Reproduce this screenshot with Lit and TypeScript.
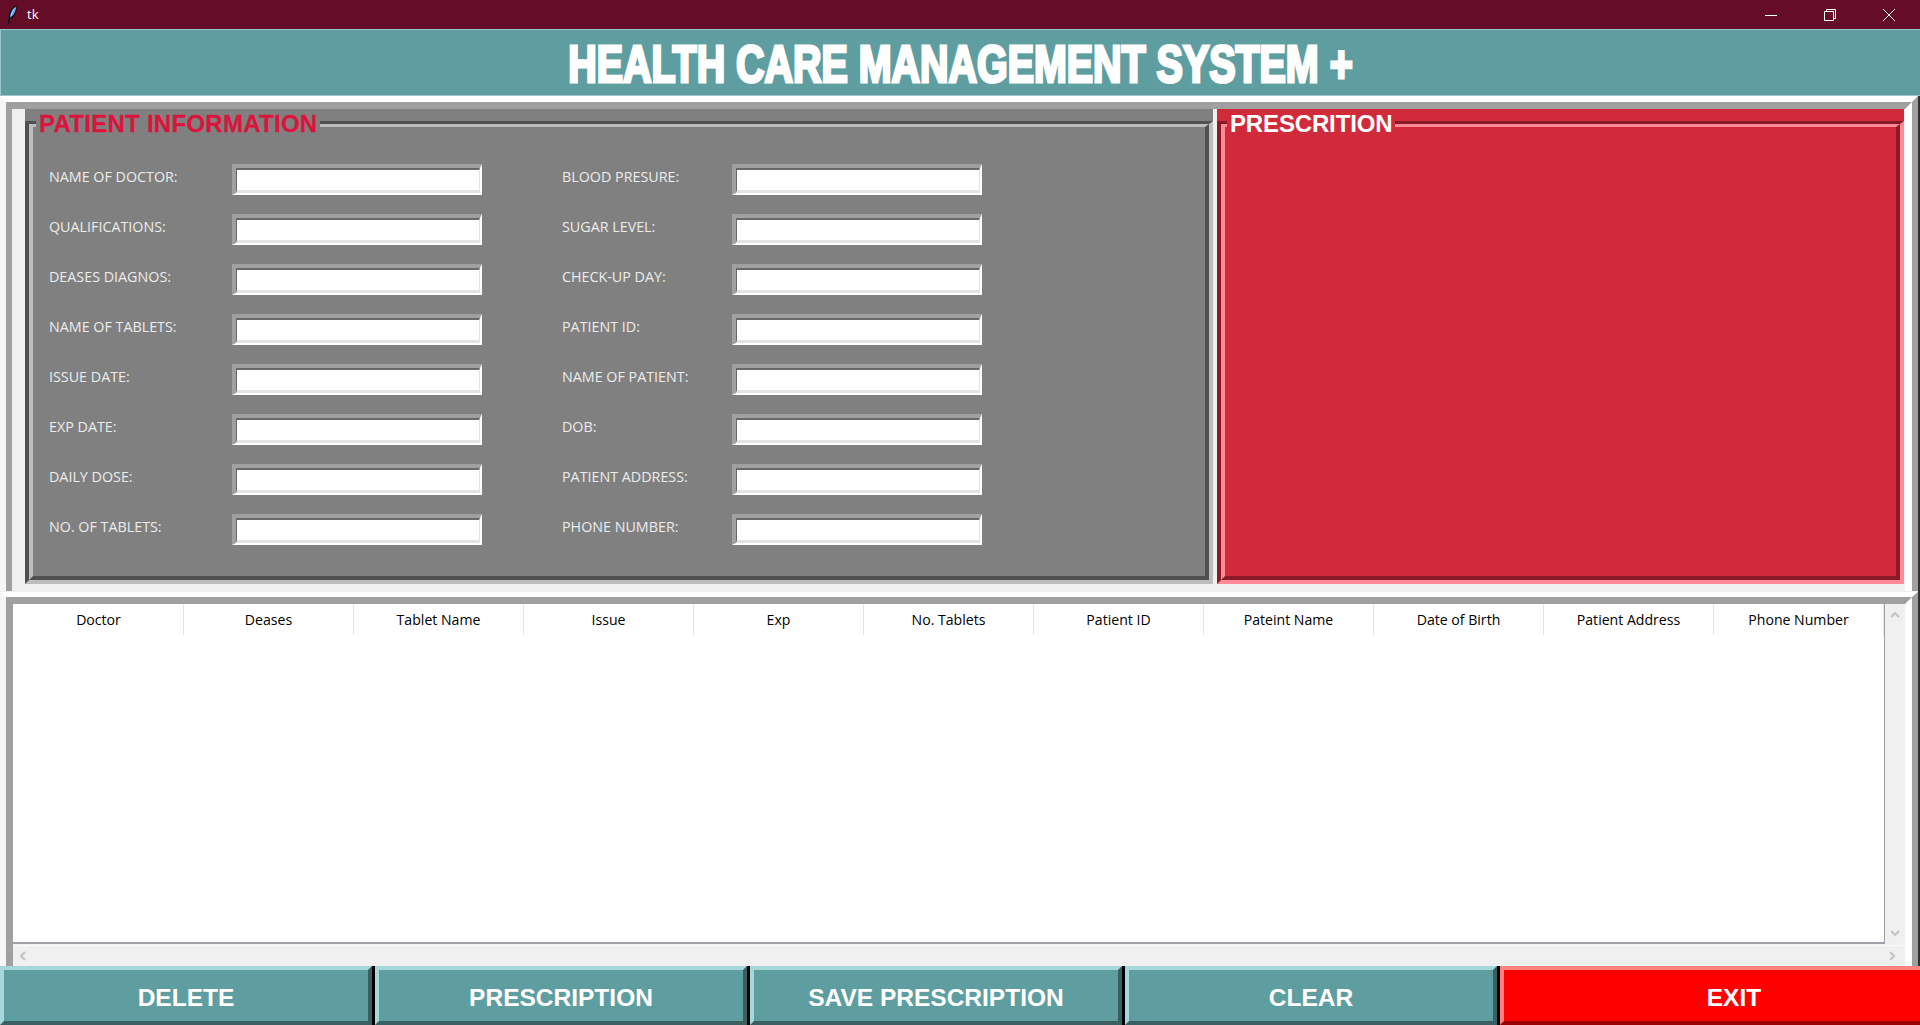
import { LitElement, html, css } from "lit";
import { customElement } from "lit/decorators.js";

const LEFT = ["NAME OF DOCTOR:", "QUALIFICATIONS:", "DEASES DIAGNOS:", "NAME OF TABLETS:", "ISSUE DATE:", "EXP DATE:", "DAILY DOSE:", "NO. OF TABLETS:"];
const RIGHT = ["BLOOD PRESURE:", "SUGAR LEVEL:", "CHECK-UP DAY:", "PATIENT ID:", "NAME OF PATIENT:", "DOB:", "PATIENT ADDRESS:", "PHONE NUMBER:"];
const COLS = ["Doctor", "Deases", "Tablet Name", "Issue", "Exp", "No. Tablets", "Patient ID", "Pateint Name", "Date of Birth", "Patient Address", "Phone Number"];
const BTNS = ["DELETE", "PRESCRIPTION", "SAVE PRESCRIPTION", "CLEAR"];

@customElement("app-root")
export class AppRoot extends LitElement {
  static styles = css`
    :host { display: block; width: 1920px; height: 1025px; overflow: hidden; background: #f0f0f0; font-family: "Open Sans", "Noto Sans", sans-serif; }
    .titlebar { height: 29px; background: #650c27; display: flex; align-items: center; color: #fff; }
    .feather { margin-left: 6px; width: 12px; height: 20px; }
    .tk { margin-left: 9px; font-size: 13px; margin-top: -1px; }
    .ctrls { margin-left: auto; display: flex; padding-right: 2px; }
    .ctrl { width: 59px; height: 29px; display: flex; align-items: center; justify-content: center; }
    .ctrl svg { width: 14px; height: 14px; }
    .header { height: 67px; box-sizing: border-box; background: #5f9ea0; border-top: 1px solid #9cc7c8; border-left: 1px solid #9cc7c8; border-bottom: 1px solid #9cc7c8; display: flex; align-items: center; justify-content: center; }
    .header h1 { margin: 0; font: bold 51px "Liberation Sans", Arial, sans-serif; color: #fff; -webkit-text-stroke: 3px #fff; white-space: nowrap; transform: scaleX(0.773); position: relative; top: 2px; }
    .body { border-right: 2px solid #303030; width: 1918px; }
    .outer { box-sizing: border-box; border-style: solid; border-width: 6px 6px 0 6px; border-color: #fff #a0a0a0 #a0a0a0 #f6f6f6; }
    .inner { box-sizing: border-box; border-style: solid; border-width: 7px 7px 0 6px; border-color: #a0a0a0 #fff #fff #a0a0a0; }
    .top.outer { height: 495px; }
    .top .inner { height: 489px; padding-left: 13px; display: flex; gap: 4px; background: #f0f0f0; }
    .panel { position: relative; height: 475px; box-sizing: border-box; padding-top: 12px; }
    .panel.grey { width: 1188px; background: #808080; --dk: #505050; --lt: #bdbdbd; }
    .panel.red { width: 687px; background: #d02a3b; --dk: #8a1a26; --lt: #ff8a95; }
    .g1 { height: 100%; box-sizing: border-box; border-style: solid; border-width: 3px 4px 4px 4px; border-color: var(--dk) var(--lt) var(--lt) var(--dk); }
    .g2 { height: 100%; box-sizing: border-box; border-style: solid; border-width: 3px 4px 4px 4px; border-color: var(--lt) var(--dk) var(--dk) var(--lt); }
    .legend { position: absolute; top: 0; height: 26px; padding: 2px 3px 0; font: bold 24px/26px "Liberation Sans", Arial, sans-serif; }
    .grey .legend { left: 11px; background: #808080; color: #dc143c; letter-spacing: 0.27px; -webkit-text-stroke: 0.3px #dc143c; }
    .red .legend { left: 10px; background: #d02a3b; color: #fff; letter-spacing: -0.15px; }
    .form { padding: 37px 0 0 16px; display: grid; grid-template-columns: 183px 250px 80px 170px 250px; grid-auto-rows: 31px; row-gap: 19px; align-items: center; }
    .lbl { font-size: 14.3px; color: #ececec; margin-top: -6px; white-space: nowrap; }
    .entry { box-sizing: border-box; height: 31px; width: 250px; background: #fff; border-style: solid; border-width: 4px 2px 2px 4px; border-color: #a0a0a0 #fff #fff #a0a0a0; }
    .entry div { box-sizing: border-box; height: 100%; border-style: solid; border-width: 2px 1px 3px 1px; border-color: #696969 #e3e3e3 #e3e3e3 #696969; }
    .bot.outer { height: 374px; border-top-width: 5px; margin-top: 1px; }
    .bot .inner { height: 369px; border-left-width: 7px; display: flex; flex-direction: column; background: #f0f0f0; }
    .area { display: flex; height: 341px; }
    .tree { width: 1872px; box-sizing: border-box; background: #fff; border-right: 1px solid #a0a0a8; border-bottom: 2px solid #a0a0a8; padding-left: 1px; }
    .heads { display: grid; grid-template-columns: repeat(11, 170px); height: 31px; }
    .head { border-right: 1px solid #e5e5e5; display: flex; align-items: center; justify-content: center; font-size: 14.1px; color: #000; white-space: nowrap; }
    .vs { flex: 1; display: flex; flex-direction: column; justify-content: space-between; align-items: center; padding: 6px 0; }
    .hs { margin-top: 1px; height: 20px; display: flex; justify-content: space-between; align-items: center; padding: 0 8px 0 5px; border-top: 1px solid #fafafa; }
    .arrow { width: 10px; height: 10px; display: block; }
    .btns { display: flex; width: 1920px; height: 59px; overflow: hidden; }
    .btn { flex: 0 0 375px; box-sizing: border-box; padding-right: 3px; background: #000; }
    .btn.exit { flex: 0 0 468px; padding-right: 0; }
    .face { box-sizing: border-box; height: 100%; border-style: solid; border-width: 4px; border-color: #a6d8da #3a5f60 #3a5f60 #a6d8da; background: #5f9ea0; color: #fff; font: bold 24.5px "Liberation Sans", Arial, sans-serif; display: flex; align-items: center; justify-content: center; padding-top: 4px; }
    .exit .face { background: #ff0000; border-color: #ff8080 #990000 #990000 #ff8080; }
  `;

  private chevron(d: string) {
    return html`<svg class="arrow" viewBox="0 0 10 10"><path d="${d}" fill="none" stroke="#c4c4c4" stroke-width="2.2"/></svg>`;
  }

  render() {
    const rows = LEFT.map((l, i) => html`
      <div class="lbl">${l}</div><div class="entry"><div></div></div><div></div>
      <div class="lbl">${RIGHT[i]}</div><div class="entry"><div></div></div>`);
    return html`
      <div class="titlebar">
        <svg class="feather" viewBox="0 0 12 20">
          <path d="M11 0.5C6.5 1.5 3 6 2.8 11L1.5 19.5L2.6 19.5L4 14C8 13 11 7 11 0.5Z" fill="#101018"/>
          <path d="M10.3 1.6C7 3 4.4 7 4 12.6C7.6 11 9.8 6.6 10.3 1.6Z" fill="#5ea4ee"/>
          <path d="M9 3.4C7 5.2 5.6 8 5.2 10.8" fill="none" stroke="#cfe4fa" stroke-width="0.8"/>
        </svg>
        <span class="tk">tk</span>
        <div class="ctrls">
          <div class="ctrl"><svg viewBox="0 0 14 14"><path d="M1 7.5H13" stroke="#fff" fill="none"/></svg></div>
          <div class="ctrl"><svg viewBox="0 0 14 14"><path d="M1.5 3.5H10.5V12.5H1.5ZM3.5 3.5V1.5H12.5V10.5H10.5" stroke="#fff" fill="none"/></svg></div>
          <div class="ctrl"><svg viewBox="0 0 14 14"><path d="M1 1L13 13M13 1L1 13" stroke="#fff" fill="none"/></svg></div>
        </div>
      </div>
      <div class="header"><h1>HEALTH CARE MANAGEMENT SYSTEM +</h1></div>
      <div class="body">
        <div class="top outer"><div class="inner">
          <div class="panel grey">
            <div class="g1"><div class="g2"><div class="form">${rows}</div></div></div>
            <div class="legend">PATIENT INFORMATION</div>
          </div>
          <div class="panel red">
            <div class="g1"><div class="g2"></div></div>
            <div class="legend">PRESCRITION</div>
          </div>
        </div></div>
        <div class="bot outer"><div class="inner">
          <div class="area">
            <div class="tree"><div class="heads">${COLS.map((c) => html`<div class="head">${c}</div>`)}</div></div>
            <div class="vs">${this.chevron("M1 7L5 3L9 7")}${this.chevron("M1 3L5 7L9 3")}</div>
          </div>
          <div class="hs">${this.chevron("M7 1L3 5L7 9")}${this.chevron("M3 1L7 5L3 9")}</div>
        </div></div>
      </div>
      <div class="btns">
        ${BTNS.map((b) => html`<div class="btn"><div class="face">${b}</div></div>`)}
        <div class="btn exit"><div class="face">EXIT</div></div>
      </div>
    `;
  }
}
